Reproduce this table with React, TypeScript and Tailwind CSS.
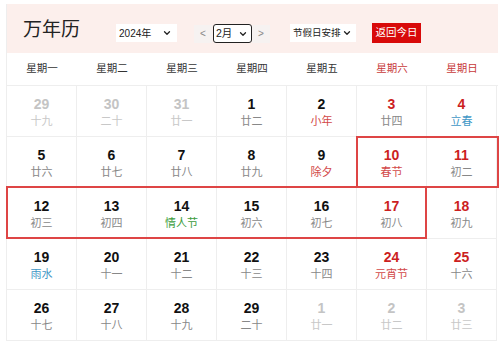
import React from 'react';
import { ChevronDown } from 'lucide-react';

type Day = {
  num: number;
  lunar: string;
  other?: boolean; // not in this month
  red?: boolean; // weekend / rest day number
  tone?: 'fest' | 'term' | 'green';
};

const weekdays = ['星期一', '星期二', '星期三', '星期四', '星期五', '星期六', '星期日'];

const rows: Day[][] = [
  [
    { num: 29, lunar: '十九', other: true },
    { num: 30, lunar: '二十', other: true },
    { num: 31, lunar: '廿一', other: true },
    { num: 1, lunar: '廿二' },
    { num: 2, lunar: '小年', tone: 'fest' },
    { num: 3, lunar: '廿四', red: true },
    { num: 4, lunar: '立春', red: true, tone: 'term' },
  ],
  [
    { num: 5, lunar: '廿六' },
    { num: 6, lunar: '廿七' },
    { num: 7, lunar: '廿八' },
    { num: 8, lunar: '廿九' },
    { num: 9, lunar: '除夕', tone: 'fest' },
    { num: 10, lunar: '春节', red: true, tone: 'fest' },
    { num: 11, lunar: '初二', red: true },
  ],
  [
    { num: 12, lunar: '初三' },
    { num: 13, lunar: '初四' },
    { num: 14, lunar: '情人节', tone: 'green' },
    { num: 15, lunar: '初六' },
    { num: 16, lunar: '初七' },
    { num: 17, lunar: '初八', red: true },
    { num: 18, lunar: '初九', red: true },
  ],
  [
    { num: 19, lunar: '雨水', tone: 'term' },
    { num: 20, lunar: '十一' },
    { num: 21, lunar: '十二' },
    { num: 22, lunar: '十三' },
    { num: 23, lunar: '十四' },
    { num: 24, lunar: '元宵节', red: true, tone: 'fest' },
    { num: 25, lunar: '十六', red: true },
  ],
  [
    { num: 26, lunar: '十七' },
    { num: 27, lunar: '十八' },
    { num: 28, lunar: '十九' },
    { num: 29, lunar: '二十' },
    { num: 1, lunar: '廿一', other: true },
    { num: 2, lunar: '廿二', other: true },
    { num: 3, lunar: '廿三', other: true },
  ],
];

const numColor = (d: Day) => {
  if (d.other) return 'text-[#c4c4c4]';
  if (d.red) return 'text-[#cc1f1f]';
  return 'text-[#111]';
};

const lunarColor = (d: Day) => {
  if (d.other) return 'text-[#c8c8c8]';
  if (d.tone === 'fest') return 'text-[#d24848]';
  if (d.tone === 'term') return 'text-[#3f97c6]';
  if (d.tone === 'green') return 'text-[#3c9c3c]';
  return 'text-[#888]';
};

const DayCell: React.FC<{ d: Day }> = ({ d }) => (
  <div className="w-[70px] h-[51px] border-r border-b border-[#eeeeee] flex flex-col items-center pt-[9px]">
    <div className={`text-[14px] font-bold leading-[18px] ${numColor(d)}`}>{d.num}</div>
    <div className={`mt-[1px] text-[11px] leading-[14px] ${lunarColor(d)}`}>{d.lunar}</div>
  </div>
);

export default function App() {
  return (
    <div
      className="w-[500px] h-[345px] overflow-hidden bg-white pt-[4px] pl-[6px]"
      style={{ fontFamily: '"Liberation Sans", "Noto Sans CJK SC", sans-serif' }}
    >
      <div className="w-[492px] border-l border-[#eeeeee]">
        {/* header */}
        <div className="h-[49px] bg-[#fcefec] flex items-start pl-[16px] whitespace-nowrap">
          <div className="mt-[16px] text-[19px] leading-[20px] text-[#222]">万年历</div>
          <div className="mt-[20px] ml-[36px] w-[61px] h-[18px] bg-white flex items-center justify-between pl-[3px] pr-[5px] text-[10px] text-[#222]">
            <span>2024年</span>
            <ChevronDown size={10} strokeWidth={3} />
          </div>
          <div className="mt-[20px] ml-[17px] flex items-center">
            <div className="w-[18px] h-[18px] bg-[#f6f2f1] flex items-center justify-center text-[10px] text-[#888]">&lt;</div>
            <div className="ml-[1px] w-[39px] h-[19px] border-[1.5px] border-[#222] rounded-[3px] bg-white flex items-center justify-between pl-[2px] pr-[3px] text-[10.5px] text-[#222]">
              <span>2月</span>
              <ChevronDown size={10} strokeWidth={3} />
            </div>
            <div className="w-[18px] h-[18px] bg-[#f6f2f1] flex items-center justify-center text-[10px] text-[#888]">&gt;</div>
          </div>
          <div className="mt-[20px] ml-[20px] w-[66px] h-[18px] bg-white flex items-center justify-between pl-[3px] pr-[4px] text-[9.5px] text-[#222]">
            <span>节假日安排</span>
            <ChevronDown size={10} strokeWidth={3} />
          </div>
          <div className="mt-[19px] ml-[16px] w-[49px] h-[20px] bg-[#d80a0a] text-white text-[10.5px] flex items-center justify-center">
            返回今日
          </div>
        </div>

        {/* weekdays */}
        <div className="flex h-[33px] border-b border-[#eeeeee]">
          {weekdays.map((w, i) => (
            <div
              key={w}
              className={`w-[70px] flex items-center justify-center text-[10.5px] ${i >= 5 ? 'text-[#c83a3a]' : 'text-[#333]'}`}
            >
              {w}
            </div>
          ))}
        </div>

        {/* days */}
        <div className="relative">
          {rows.map((r, ri) => (
            <div key={ri} className="flex">
              {r.map((d, ci) => (
                <DayCell key={ci} d={d} />
              ))}
            </div>
          ))}
          <div className="absolute left-[349px] top-[50px] w-[143px] h-[52px] border-2 border-[#de4545]" />
          <div className="absolute left-[-1px] top-[100px] w-[421px] h-[53px] border-2 border-[#de4545]" />
        </div>
      </div>
    </div>
  );
}
